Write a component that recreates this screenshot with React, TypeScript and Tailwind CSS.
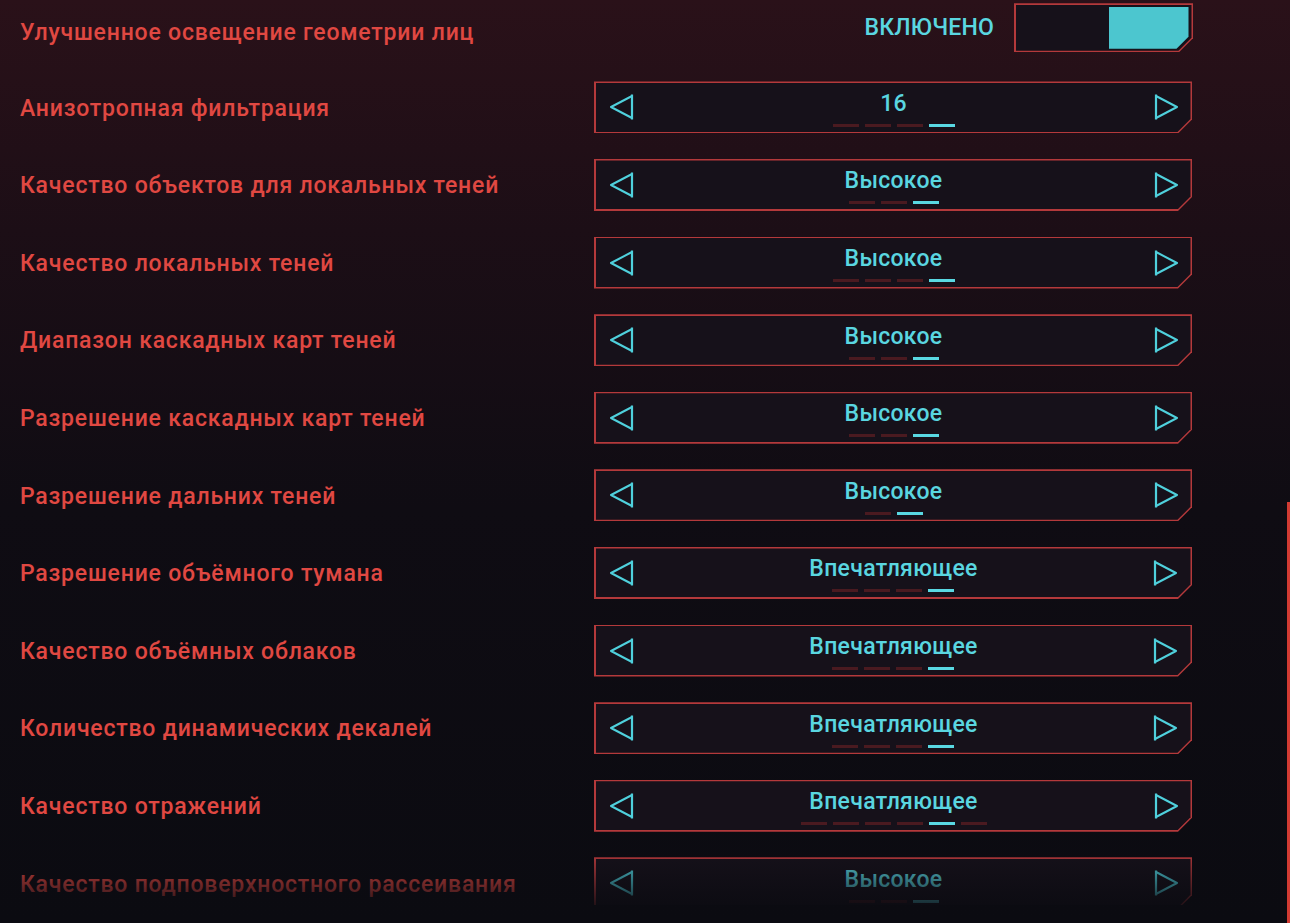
import type { ReactNode } from 'react';

type Row = {
    label: string;
    value: string;
    count: number;
    active: number;
};

const rows: Row[] = [
    { label: 'Анизотропная фильтрация', value: '16', count: 4, active: 3 },
    { label: 'Качество объектов для локальных теней', value: 'Высокое', count: 3, active: 2 },
    { label: 'Качество локальных теней', value: 'Высокое', count: 4, active: 3 },
    { label: 'Диапазон каскадных карт теней', value: 'Высокое', count: 3, active: 2 },
    { label: 'Разрешение каскадных карт теней', value: 'Высокое', count: 3, active: 2 },
    { label: 'Разрешение дальних теней', value: 'Высокое', count: 2, active: 1 },
    { label: 'Разрешение объёмного тумана', value: 'Впечатляющее', count: 4, active: 3 },
    { label: 'Качество объёмных облаков', value: 'Впечатляющее', count: 4, active: 3 },
    { label: 'Количество динамических декалей', value: 'Впечатляющее', count: 4, active: 3 },
    { label: 'Качество отражений', value: 'Впечатляющее', count: 6, active: 4 },
    { label: 'Качество подповерхностного рассеивания', value: 'Высокое', count: 3, active: 2 },
];

const font = { fontFamily: 'Roboto, "Noto Sans", sans-serif' };

function ArrowLeft() {
    return (
        <svg width="26" height="30" viewBox="0 0 26 30" fill="none" className="shrink-0">
            <path d="M23 4 L2 15 L23 26" stroke="#4fd0dc" strokeWidth="2" strokeLinejoin="round" />
            <path d="M23 2.5 L23 27.5" stroke="#4fd0dc" strokeWidth="2.2" />
        </svg>
    );
}

function ArrowRight() {
    return (
        <svg width="26" height="30" viewBox="0 0 26 30" fill="none" className="shrink-0">
            <path d="M3 4 L24 15 L3 26" stroke="#4fd0dc" strokeWidth="2" strokeLinejoin="round" />
            <path d="M3 2.5 L3 27.5" stroke="#4fd0dc" strokeWidth="2.2" />
        </svg>
    );
}

function Frame({ children, className }: { children: ReactNode; className: string }) {
    return (
        <div
            className={`bg-[#b4393b] p-[1.5px] [clip-path:polygon(0_0,100%_0,100%_calc(100%-14px),calc(100%-14px)_100%,0_100%)] ${className}`}
        >
            <div className="h-full w-full bg-[#16111a] [clip-path:polygon(0_0,100%_0,100%_calc(100%-13px),calc(100%-13px)_100%,0_100%)]">
                {children}
            </div>
        </div>
    );
}

function Selector({ row }: { row: Row }) {
    return (
        <Frame className="h-[52px] w-[598px] shrink-0">
            <div className="flex h-full items-center justify-between pl-[13px] pr-[12px]">
                <ArrowLeft />
                <div className="flex flex-col items-center pt-[2px]">
                    <span className="text-[23px] font-medium leading-[28px] tracking-[0.3px] text-[#5ad6e0]" style={font}>
                        {row.value}
                    </span>
                    <div className="mt-[6px] flex gap-[6px]">
                        {Array.from({ length: row.count }).map((_, i) => (
                            <span
                                key={i}
                                className={
                                    i === row.active
                                        ? 'h-[3px] w-[26px] bg-[#59d8e2]'
                                        : 'h-[3px] w-[26px] bg-[#4a1a20]'
                                }
                            />
                        ))}
                    </div>
                </div>
                <ArrowRight />
            </div>
        </Frame>
    );
}

export default function App() {
    return (
        <div className="relative h-[923px] w-[1290px] overflow-hidden bg-[linear-gradient(to_bottom,#2a1119_0%,#1c0e16_25%,#0f0c13_55%,#0b0b11_100%)]">
            <div className="relative h-[905px] overflow-hidden">
                <div className="-mt-[9px] flex flex-col">
                    <div className="flex h-[77.6px] items-center pl-[20px] pr-[97px]">
                        <span className="pt-[6px] text-[23px] font-medium tracking-[0.8px] text-[#e04842]" style={font}>
                            Улучшенное освещение геометрии лиц
                        </span>
                        <div className="ml-auto flex items-center gap-[20px] pb-[4px]">
                            <span className="text-[23px] font-medium uppercase tracking-[0.2px] text-[#5ad6e0]" style={font}>
                                Включено
                            </span>
                            <Frame className="h-[49px] w-[179px]">
                                <div className="flex h-full justify-end py-[2px] pr-[3px]">
                                    <div className="h-full w-[80px] bg-[#4cc6cf] [clip-path:polygon(0_0,100%_0,100%_calc(100%-12px),calc(100%-12px)_100%,0_100%)]" />
                                </div>
                            </Frame>
                        </div>
                    </div>
                    {rows.map((row) => (
                        <div key={row.label} className="flex h-[77.6px] items-center pl-[20px] pr-[98px]">
                            <span className="pt-[3px] text-[23px] font-medium tracking-[0.8px] text-[#e04842]" style={font}>
                                {row.label}
                            </span>
                            <div className="ml-auto">
                                <Selector row={row} />
                            </div>
                        </div>
                    ))}
                </div>
                <div className="pointer-events-none absolute inset-x-0 bottom-0 h-[55px] bg-gradient-to-b from-transparent to-[#0b0b11]/85" />
            </div>
            <div className="absolute bottom-0 right-0 top-[502px] w-[3px] bg-[#d23b33]" />
        </div>
    );
}
